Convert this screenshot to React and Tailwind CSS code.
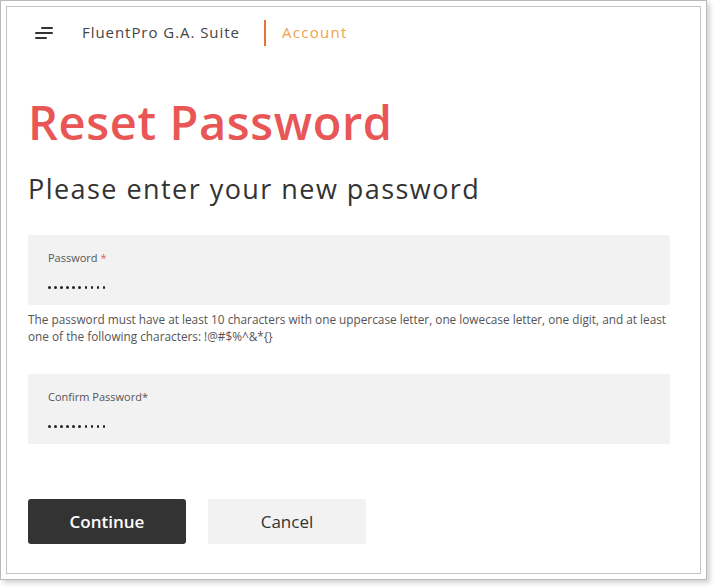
import React from "react";

const MenuIcon = () => (
  <svg width="18" height="14" viewBox="0 0 18 14" fill="none">
    <rect x="6" y="1" width="12" height="2" rx="1" fill="#333" />
    <rect x="0" y="6" width="18" height="2" rx="1" fill="#333" />
    <rect x="0" y="11" width="12" height="2" rx="1" fill="#333" />
  </svg>
);

const Dots = () => (
  <div className="flex gap-[3.5px]">
    {Array.from({ length: 10 }).map((_, i) => (
      <span key={i} className="w-[2.6px] h-[2.6px] rounded-full bg-[#222]" />
    ))}
  </div>
);

const Field = ({ label, required }) => (
  <div className="w-[642px] h-[70px] bg-[#f2f2f2] rounded-[2px] px-[20px] pt-[16px]">
    <div className="text-[11px] leading-[14px] text-[#555]">
      {label}
      {required && <span className="text-[#e06060]"> *</span>}
    </div>
    <div className="mt-[21px]">
      <Dots />
    </div>
  </div>
);

export default function App() {
  return (
    <div className="w-[715px] h-[588px] bg-white font-['Open_Sans',sans-serif]">
      <div className="w-[707px] h-[580px] border border-[#b9b9b9] bg-white p-[5px] shadow-[3px_3px_5px_rgba(0,0,0,0.18)]">
        <div className="w-full h-full border border-[#c4c4c4] pl-[21px]">
          {/* header */}
          <div className="flex items-center h-[50px] pt-[1px]">
            <div className="ml-[7px] w-[18px] flex">
              <MenuIcon />
            </div>
            <div className="ml-[29px] text-[15px] text-[#444] tracking-[0.95px]">FluentPro G.A. Suite</div>
            <div className="ml-[24px] w-[2px] h-[26px] bg-[#e8703a]" />
            <div className="ml-[16px] text-[15px] text-[#f0a24e] tracking-[1.3px]">Account</div>
          </div>

          <h1 className="mt-[37px] text-[47px] leading-[56px] font-semibold text-[#e85656] tracking-[0.6px]">
            Reset Password
          </h1>
          <h2 className="mt-[23px] text-[27px] leading-[32px] font-medium text-[#333] tracking-[1.45px]">
            Please enter your new password
          </h2>

          <div className="mt-[30px]">
            <Field label="Password" required />
          </div>
          <p className="mt-[6px] text-[11.8px] leading-[17px] text-[#555] w-[680px] whitespace-nowrap">
            The password must have at least 10 characters with one uppercase letter, one lowecase letter, one digit, and at least
            <br />
            one of the following characters: !@#$%^&amp;*{"{}"}
          </p>

          <div className="mt-[29px]">
            <Field label="Confirm Password*" />
          </div>

          <div className="mt-[55px] flex gap-[22px]">
            <button className="w-[158px] h-[45px] bg-[#333] rounded-[3px] text-white text-[17px] font-semibold">
              Continue
            </button>
            <button className="w-[158px] h-[45px] bg-[#f2f2f2] text-[#333] text-[17px]">
              Cancel
            </button>
          </div>
        </div>
      </div>
    </div>
  );
}
